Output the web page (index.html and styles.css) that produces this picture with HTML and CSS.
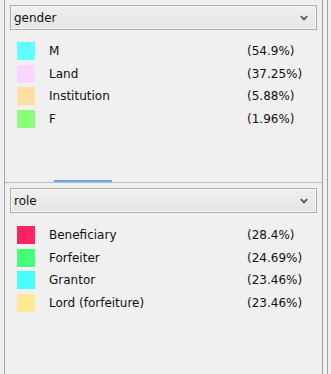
FILE: index.html
```html
<!DOCTYPE html>
<html>
<head>
<meta charset="utf-8">
<link rel="stylesheet" href="styles.css">
</head>
<body>
<div class="window">
  <div class="panel">
    <section class="section first">
      <div class="combo">
        <span class="combo-text">gender</span>
        <svg class="chev" width="8" height="6" viewBox="0 0 8 6"><path d="M0.8 1 L4 4.4 L7.2 1" fill="none" stroke="#555" stroke-width="1.8"/></svg>
      </div>
      <ul class="legend">
        <li class="row"><span class="sw" style="background:#5effff"></span><span class="lbl">M</span><span class="pct">(54.9%)</span></li>
        <li class="row"><span class="sw" style="background:#f8d6ff"></span><span class="lbl">Land</span><span class="pct">(37.25%)</span></li>
        <li class="row"><span class="sw" style="background:#ffe0a3"></span><span class="lbl">Institution</span><span class="pct">(5.88%)</span></li>
        <li class="row"><span class="sw" style="background:#8bff7a"></span><span class="lbl">F</span><span class="pct">(1.96%)</span></li>
      </ul>
      <div class="handle"></div>
    </section>
    <div class="divider"></div>
    <section class="section second">
      <div class="combo">
        <span class="combo-text">role</span>
        <svg class="chev" width="8" height="6" viewBox="0 0 8 6"><path d="M0.8 1 L4 4.4 L7.2 1" fill="none" stroke="#555" stroke-width="1.8"/></svg>
      </div>
      <ul class="legend">
        <li class="row"><span class="sw" style="background:#ff2461"></span><span class="lbl">Beneficiary</span><span class="pct">(28.4%)</span></li>
        <li class="row"><span class="sw" style="background:#46ff78"></span><span class="lbl">Forfeiter</span><span class="pct">(24.69%)</span></li>
        <li class="row"><span class="sw" style="background:#48ffff"></span><span class="lbl">Grantor</span><span class="pct">(23.46%)</span></li>
        <li class="row"><span class="sw" style="background:#ffe994"></span><span class="lbl">Lord (forfeiture)</span><span class="pct">(23.46%)</span></li>
      </ul>
    </section>
  </div>
  <div class="gutter"></div>
  <div class="edge"></div>
</div>
</body>
</html>
```
FILE: styles.css
```css
html, body {
  margin: 0;
  padding: 0;
  background: #f0f0f0;
}
body {
  font-family: "DejaVu Sans", "Liberation Sans", sans-serif;
  font-size: 12px;
  color: #111;
}
.window {
  display: flex;
  width: 331px;
  height: 374px;
  padding-left: 4px;
  box-sizing: border-box;
}
.panel {
  width: 319px;
  box-sizing: border-box;
  border-left: 1px solid #a3a3a3;
  border-right: 1px solid #a3a3a3;
  display: flex;
  flex-direction: column;
}
.gutter {
  width: 4px;
}
.edge {
  width: 1px;
  background: #a3a3a3;
}
.section {
  display: flex;
  flex-direction: column;
  padding-top: 5px;
}
.section.first {
  height: 182px;
  box-sizing: border-box;
}
.section.second {
  flex: 1;
}
.combo {
  margin-left: 5px;
  width: 307px;
  height: 25px;
  box-sizing: border-box;
  border: 1px solid #acacac;
  background: linear-gradient(#f0f0f0, #e5e5e5);
  box-shadow: inset 0 0 0 1px #f7f7f7;
  display: flex;
  align-items: center;
  padding: 0 8px 0 3px;
}
.combo-text {
  flex: 1;
}
.chev {
  display: block;
}
.legend {
  list-style: none;
  margin: 10px 0 0 0;
  padding: 0;
}
.second .legend {
  margin-top: 11px;
}
.row {
  height: 22.5px;
  display: flex;
  align-items: center;
  padding-left: 12px;
}
.sw {
  width: 18px;
  height: 18px;
  flex: none;
}
.lbl {
  margin-left: 14px;
  width: 198px;
}
.pct {
  white-space: nowrap;
}
.handle {
  margin-top: auto;
  margin-left: 49px;
  width: 58px;
  height: 2px;
  background: #74a3dc;
}
.divider {
  height: 1px;
  background: #a9c0da;
}
```
